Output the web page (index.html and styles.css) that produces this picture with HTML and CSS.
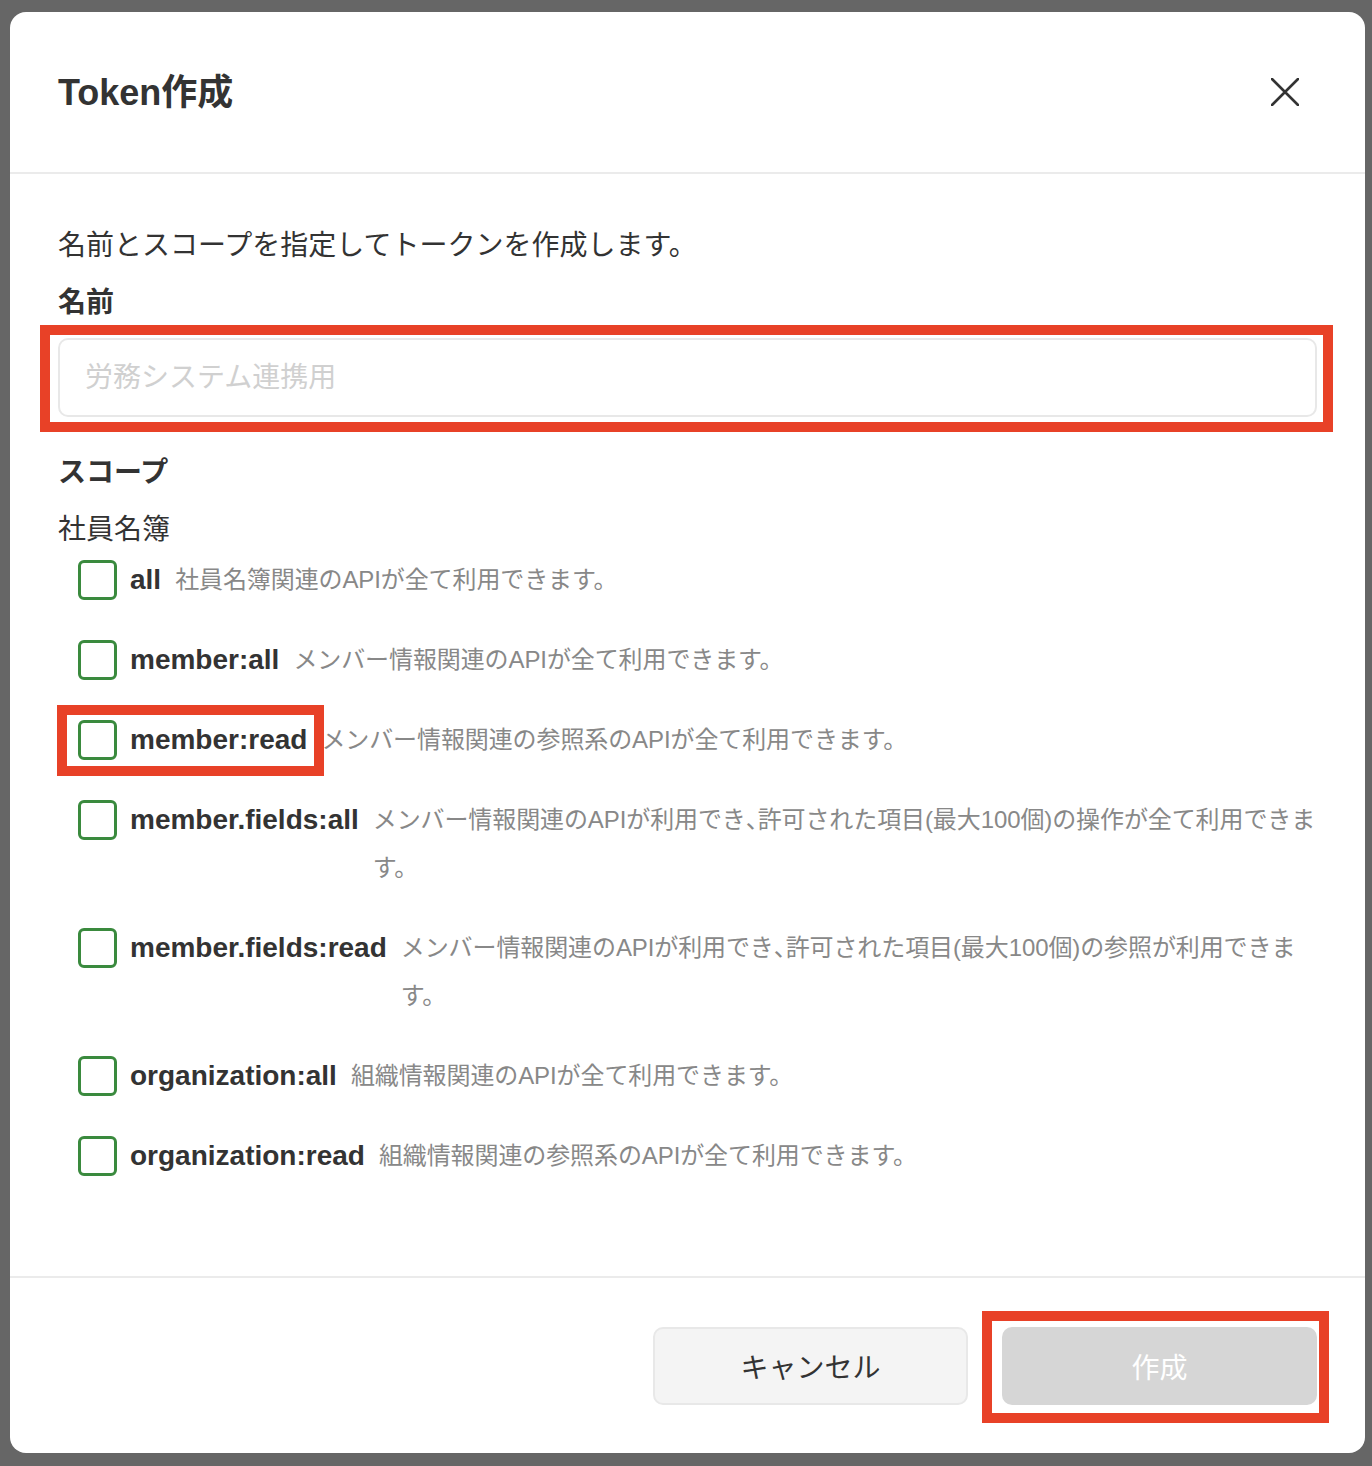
FILE: index.html
```html
<!DOCTYPE html>
<html lang="ja">
<head>
    <meta charset="UTF-8">
    <meta name="viewport" content="width=device-width, initial-scale=1.0">
    <title>Token作成</title>
    <link rel="stylesheet" href="styles.css">
</head>
<body>

    <div class="modal">
        <div class="modal-header">
            <h2>Token作成</h2>
            <button class="close-btn" aria-label="閉じる">
                <svg width="28" height="28" viewBox="0 0 28 28">
                    <path d="M1 1 L27 27 M27 1 L1 27" stroke="#333" stroke-width="2.6" stroke-linecap="round" fill="none"/>
                </svg>
            </button>
        </div>

        <div class="modal-body">
            <p class="lead">名前とスコープを指定してトークンを作成します。</p>

            <label class="field-label" for="token-name">名前</label>
            <div class="input-wrap marked">
                <input id="token-name" type="text" placeholder="労務システム連携用">
            </div>

            <div class="field-label scope-title">スコープ</div>
            <div class="group-title">社員名簿</div>

            <ul class="scope-list">
                <li class="scope">
                    <label class="scope-key"><span class="box"></span><span class="scope-name">all</span></label>
                    <span class="scope-desc">社員名簿関連のAPIが全て利用できます。</span>
                </li>
                <li class="scope">
                    <label class="scope-key"><span class="box"></span><span class="scope-name">member:all</span></label>
                    <span class="scope-desc">メンバー情報関連のAPIが全て利用できます。</span>
                </li>
                <li class="scope">
                    <label class="scope-key marked"><span class="box"></span><span class="scope-name">member:read</span></label>
                    <span class="scope-desc">メンバー情報関連の参照系のAPIが全て利用できます。</span>
                </li>
                <li class="scope">
                    <label class="scope-key"><span class="box"></span><span class="scope-name">member.fields:all</span></label>
                    <span class="scope-desc">メンバー情報関連のAPIが利用でき<span class="comma">、</span>許可された項目(最大100個)の操作が全て利用できま<br>す。</span>
                </li>
                <li class="scope">
                    <label class="scope-key"><span class="box"></span><span class="scope-name">member.fields:read</span></label>
                    <span class="scope-desc">メンバー情報関連のAPIが利用でき<span class="comma">、</span>許可された項目(最大100個)の参照が利用できま<br>す。</span>
                </li>
                <li class="scope">
                    <label class="scope-key"><span class="box"></span><span class="scope-name">organization:all</span></label>
                    <span class="scope-desc">組織情報関連のAPIが全て利用できます。</span>
                </li>
                <li class="scope">
                    <label class="scope-key"><span class="box"></span><span class="scope-name">organization:read</span></label>
                    <span class="scope-desc">組織情報関連の参照系のAPIが全て利用できます。</span>
                </li>
            </ul>
        </div>

        <div class="modal-footer">
            <button class="btn btn-cancel">キャンセル</button>
            <button class="btn btn-create marked" disabled>作成</button>
        </div>
    </div>

</body>
</html>
```

FILE: styles.css
```css
* {
    margin: 0;
    padding: 0;
    box-sizing: border-box;
}

body {
    font-family: "Liberation Sans", "Noto Sans CJK JP", sans-serif;
    background-color: #666;
    color: #333;
    min-height: 100vh;
}

.modal {
    width: 1355px;
    margin: 12px 0 0 10px;
    background-color: #fff;
    border-radius: 16px;
}

.modal-header {
    height: 162px;
    padding: 0 48px;
    display: flex;
    align-items: center;
    justify-content: space-between;
    border-bottom: 2px solid #ebebeb;
}

.modal-header h2 {
    font-size: 36px;
    font-weight: bold;
    color: #333;
    margin-bottom: 6px;
}

.close-btn {
    width: 64px;
    height: 64px;
    display: flex;
    align-items: center;
    justify-content: center;
    background: none;
    border: none;
    cursor: pointer;
}

.modal-body {
    padding: 48px 48px 96px;
}

.lead,
.field-label,
.group-title {
    display: block;
    font-size: 28px;
    line-height: 48px;
}

.field-label {
    font-weight: bold;
    margin-top: 9px;
    margin-bottom: 11px;
}

.scope-title {
    margin-top: 32px;
    margin-bottom: 9px;
}

.group-title {
    margin-bottom: 2px;
}

/* red annotation frames drawn over the screenshot */
.marked {
    position: relative;
}

.marked::after {
    content: "";
    position: absolute;
    border: 10px solid #e84127;
    pointer-events: none;
}

.input-wrap::after {
    top: -13px;
    left: -18px;
    right: -16px;
    bottom: -15px;
}

.input-wrap input {
    width: 100%;
    height: 79px;
    padding: 0 25px;
    border: 2px solid #e8e8e8;
    border-radius: 10px;
    font-family: inherit;
    font-size: 28px;
    color: #333;
    outline: none;
}

.input-wrap input::placeholder {
    color: #d0d0d0;
}

.scope-list {
    list-style: none;
    display: flex;
    flex-direction: column;
    gap: 32px;
}

.scope {
    display: flex;
    align-items: flex-start;
    gap: 14px;
    padding-left: 20px;
}

.scope-key {
    display: flex;
    align-items: flex-start;
    gap: 13px;
    flex-shrink: 0;
    cursor: pointer;
}

.scope-key.marked::after {
    top: -11px;
    left: -21px;
    right: -17px;
    bottom: -12px;
}

.box {
    width: 39px;
    height: 40px;
    margin-top: 4px;
    border: 3px solid #3a8a3e;
    border-radius: 6px;
    flex-shrink: 0;
}

.scope-name {
    font-size: 28px;
    font-weight: bold;
    line-height: 48px;
    white-space: nowrap;
    color: #333;
}

.scope-desc {
    font-size: 24px;
    line-height: 48px;
    letter-spacing: -0.1px;
    color: #888;
}

.comma {
    font-feature-settings: "halt";
}

.modal-footer {
    display: flex;
    justify-content: flex-end;
    gap: 34px;
    padding: 49px 48px 48px;
    border-top: 2px solid #ebebeb;
}

.btn {
    width: 315px;
    height: 78px;
    border-radius: 10px;
    font-family: inherit;
    font-size: 28px;
    cursor: pointer;
}

.btn-cancel {
    background-color: #f4f4f4;
    border: 2px solid #e8e8e8;
    color: #333;
}

.btn-create {
    background-color: #d6d6d6;
    border: none;
    color: #fff;
}

.btn-create::after {
    top: -16px;
    left: -20px;
    right: -12px;
    bottom: -18px;
}
```
